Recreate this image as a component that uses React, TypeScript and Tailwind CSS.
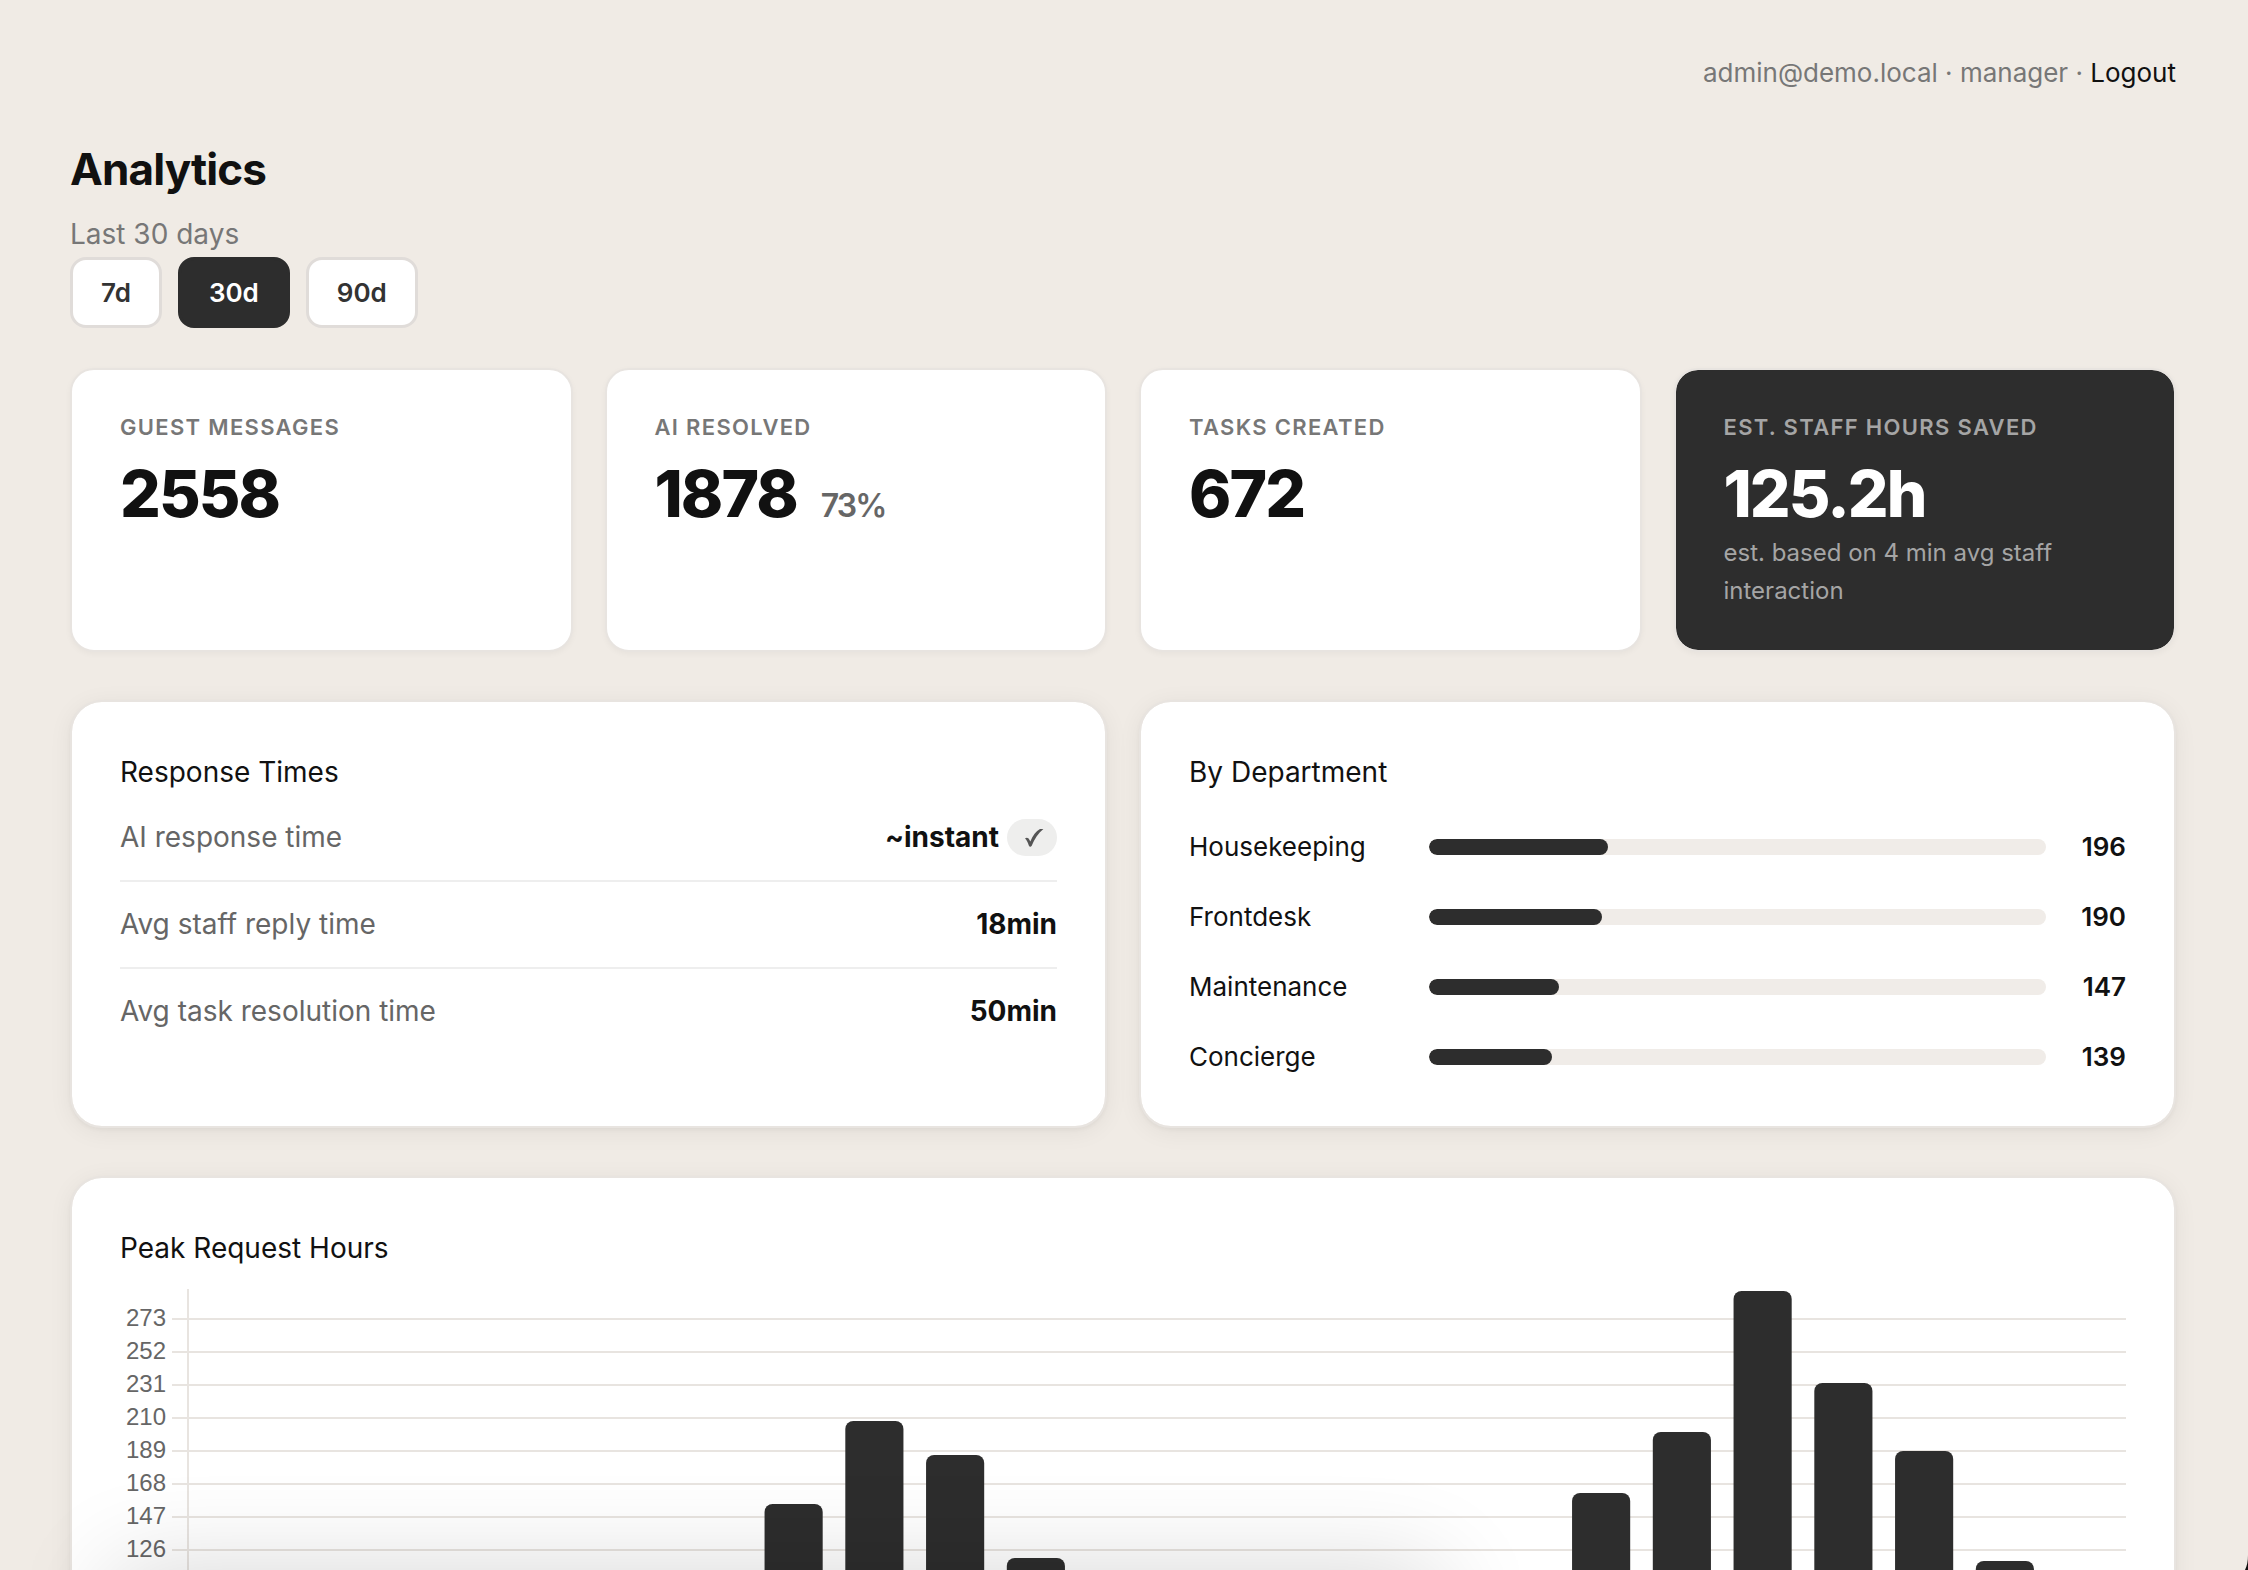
import { Fragment } from "react";

const stats = [
  { label: "Guest Messages", value: "2558" },
  { label: "AI Resolved", value: "1878", extra: "73%" },
  { label: "Tasks Created", value: "672" },
];

const departments = [
  { name: "Housekeeping", count: 196, share: 29 },
  { name: "Frontdesk", count: 190, share: 28 },
  { name: "Maintenance", count: 147, share: 21 },
  { name: "Concierge", count: 139, share: 20 },
];

const hourly = [
  { hour: 7, top: 217 },
  { hour: 8, top: 134 },
  { hour: 9, top: 168 },
  { hour: 10, top: 271 },
  { hour: 17, top: 206 },
  { hour: 18, top: 145 },
  { hour: 19, top: 4 },
  { hour: 20, top: 96 },
  { hour: 21, top: 164 },
  { hour: 22, top: 274 },
];

const ticks = [273, 252, 231, 210, 189, 168, 147, 126];

const panel =
  "rounded-[32px] border-2 border-[#e8e4e0] bg-white bg-clip-padding p-12 shadow-[0_2px_4px_rgba(0,0,0,0.04),0_4px_24px_rgba(0,0,0,0.06)]";
const heading = "text-[28px] leading-[45px] text-[#111111]";
const statLabel = "text-[22px] leading-[34px] font-semibold tracking-[0.06em] uppercase";
const statValue = "mt-[18px] text-[64px] leading-[64px] font-extrabold tracking-[-0.03em]";

function RangeButton({ children, active = false }: { children: string; active?: boolean }) {
  return (
    <button
      type="button"
      aria-pressed={active}
      className={
        active
          ? "rounded-2xl border-3 border-[#2d2d2d] bg-[#2d2d2d] px-7 py-3 text-[26px] leading-[41px] font-semibold text-white"
          : "rounded-2xl border-3 border-[#e0dcd9] bg-white px-7 py-3 text-[26px] leading-[41px] font-semibold text-[#333333]"
      }
    >
      {children}
    </button>
  );
}

function HoursChart() {
  return (
    <div className="mt-4 flex h-[520px]">
      <svg className="h-full w-[68px] shrink-0 overflow-visible" aria-hidden="true">
        {ticks.map((t, i) => (
          <Fragment key={t}>
            <text
              x={46}
              y={39 + i * 33}
              textAnchor="end"
              fill="#666666"
              className="font-['Liberation_Sans',sans-serif] text-[24px]"
            >
              {t}
            </text>
            <line x1={52} x2={68} y1={32 + i * 33} y2={32 + i * 33} stroke="#e8e4e0" strokeWidth={2} />
          </Fragment>
        ))}
      </svg>
      <svg className="h-full min-w-0 flex-1 overflow-visible" role="img" aria-label="Requests per hour of day">
        {ticks.map((t, i) => (
          <line key={t} x1="0" x2="100%" y1={32 + i * 33} y2={32 + i * 33} stroke="#e8e4e0" strokeWidth={2} />
        ))}
        <line x1="0" x2="0" y1={2} y2={461} stroke="#e8e4e0" strokeWidth={2} />
        {hourly.map((b) => (
          <rect
            key={b.hour}
            x={`${((b.hour + 0.5) / 24) * 100 - 1.5}%`}
            y={b.top}
            width="3%"
            height={461 - b.top}
            rx={8}
            fill="#2d2d2d"
          />
        ))}
      </svg>
    </div>
  );
}

export default function App() {
  return (
    <div className="relative h-screen overflow-hidden bg-[#f0ebe5] font-['Inter',sans-serif] text-[#111111]">
      <div className="flex flex-col pt-12 pr-[72px] pb-12 pl-[70px]">
        <header className="text-right text-[26px] leading-[50px] text-[#777777]">
          admin@demo.local · manager ·{" "}
          <a href="#logout" className="text-[#111111]">
            Logout
          </a>
        </header>

        <h1 className="mt-10 text-[44px] leading-[62px] font-bold tracking-[-0.02em]">Analytics</h1>
        <p className="mt-3 text-[28px] leading-[45px] text-[#777777]">Last 30 days</p>
        <div className="flex gap-4">
          <RangeButton>7d</RangeButton>
          <RangeButton active>30d</RangeButton>
          <RangeButton>90d</RangeButton>
        </div>

        <section className="mt-10 grid grid-cols-4 gap-8">
          {stats.map((s) => (
            <div
              key={s.label}
              className="rounded-3xl border-2 border-[#e8e4e0] bg-white px-12 py-10 shadow-[0_2px_6px_rgba(0,0,0,0.04)]"
            >
              <div className={`${statLabel} text-[#777777]`}>{s.label}</div>
              <div className={`${statValue} flex items-baseline gap-6`}>
                {s.value}
                {s.extra && <span className="text-[32px] font-semibold text-[#666666]">{s.extra}</span>}
              </div>
            </div>
          ))}
          <div className="rounded-3xl border-2 border-[#e8e4e0] bg-[#2d2d2d] bg-clip-padding px-12 py-10 shadow-[0_2px_6px_rgba(0,0,0,0.04)]">
            <div className={`${statLabel} text-[#a5a5a5]`}>Est. Staff Hours Saved</div>
            <div className={`${statValue} text-white`}>125.2h</div>
            <div className="mt-2 text-[24px] leading-[38px] text-[#a5a5a5]">
              est. based on 4 min avg staff interaction
            </div>
          </div>
        </section>

        <section className="mt-12 grid grid-cols-2 gap-8">
          <div className={panel}>
            <h2 className={heading}>Response Times</h2>
            <dl className="text-[28px] leading-[45px]">
              <div className="flex justify-between border-b-2 border-[#eeeeee] py-5">
                <dt className="text-[#666666]">AI response time</dt>
                <dd className="flex items-center gap-2 font-bold">
                  ~instant
                  <span className="flex h-[37px] w-[50px] items-center justify-center rounded-full bg-[#eeeeed]">
                    <svg viewBox="0 0 20 20" className="ml-1 size-5" role="img" aria-label="On target">
                      <path
                        d="M1 10.5 C2.5 9 4.5 9.5 5.5 12 L6.3 13.6 C8.8 7.5 12 3 16 1 H19.4 C14 5.5 10.5 11 7.6 18 L6 19 L4.8 17.5 C3.8 14.5 2.8 12 1 10.5 Z"
                        fill="#555555"
                      />
                    </svg>
                  </span>
                </dd>
              </div>
              <div className="flex justify-between border-b-2 border-[#eeeeee] py-5">
                <dt className="text-[#666666]">Avg staff reply time</dt>
                <dd className="font-bold">18min</dd>
              </div>
              <div className="flex justify-between py-5">
                <dt className="text-[#666666]">Avg task resolution time</dt>
                <dd className="font-bold">50min</dd>
              </div>
            </dl>
          </div>

          <div className={panel}>
            <h2 className={heading}>By Department</h2>
            <ul className="mt-[31px] flex flex-col gap-7 text-[26px] leading-[42px]">
              {departments.map((d) => (
                <li key={d.name} className="flex items-center gap-6">
                  <span className="w-[216px] shrink-0">{d.name}</span>
                  <span className="h-4 flex-1 overflow-hidden rounded-full bg-[#f0ece8]">
                    <span className="block h-full rounded-full bg-[#2d2d2d]" style={{ width: `${d.share}%` }} />
                  </span>
                  <span className="w-14 shrink-0 text-right font-semibold">{d.count}</span>
                </li>
              ))}
            </ul>
          </div>
        </section>

        <section className={`mt-12 ${panel}`}>
          <h2 className={heading}>Peak Request Hours</h2>
          <HoursChart />
        </section>
      </div>

      <div
        aria-hidden="true"
        className="pointer-events-none absolute top-full right-[36%] left-[5%] h-40 shadow-[0_0_100px_rgba(0,0,0,0.16)]"
      />
      <svg aria-hidden="true" viewBox="0 0 3 15" className="absolute right-0 bottom-0 h-[15px] w-[3px]">
        <path d="M3 0 C3 6 2 11 0 15 H3 Z" fill="#111111" />
      </svg>
    </div>
  );
}
